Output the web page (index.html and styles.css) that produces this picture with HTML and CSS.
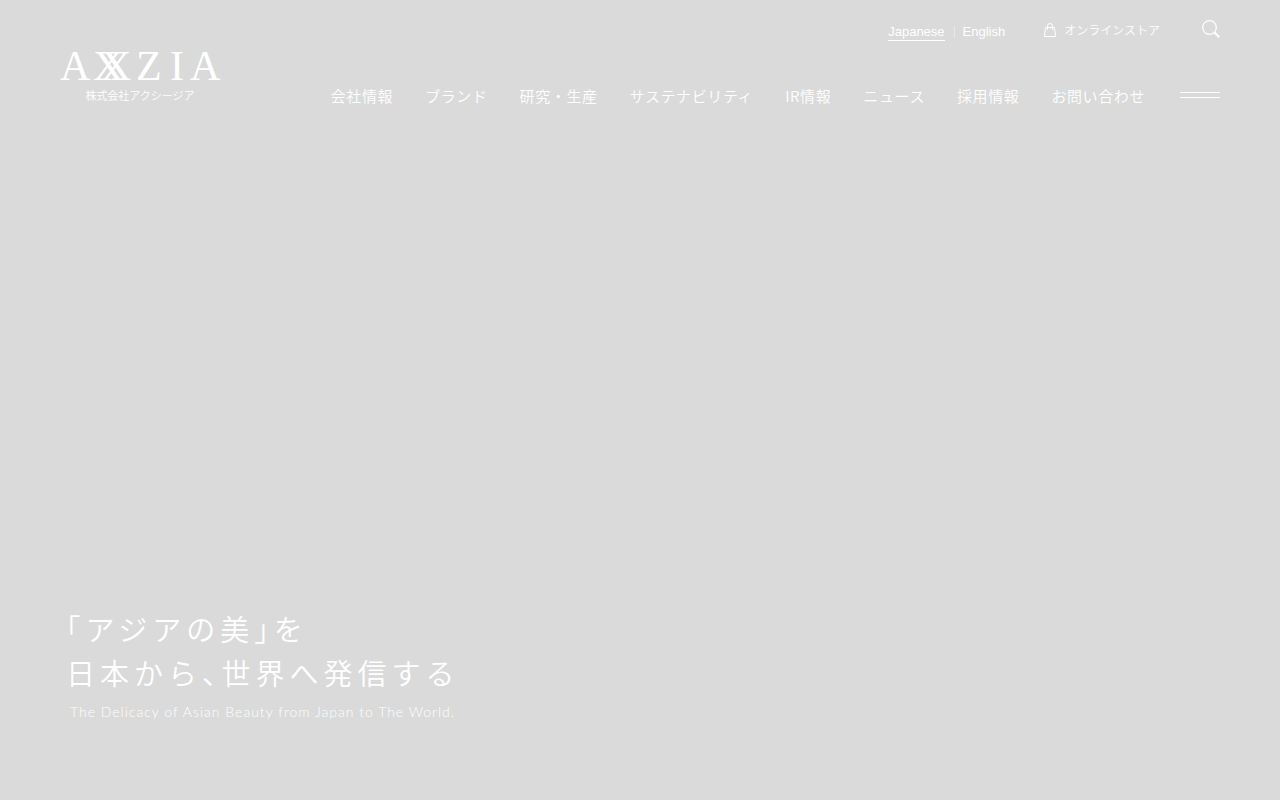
FILE: index.html
```html
<!DOCTYPE html>
<html lang="ja">
<head>
  <meta charset="UTF-8">
  <meta name="viewport" content="width=device-width, initial-scale=1.0">
  <title>株式会社アクシージア</title>
  <link rel="stylesheet" href="styles.css">
</head>
<body>
  <div class="page">
    <header class="header">
      <a class="logo" href="#">
        <svg class="logo-mark" viewBox="0 0 160 40" width="160" height="40" role="img" aria-label="AXXZIA">
          <text x="0" y="34">A</text>
          <text x="33" y="34">X</text>
          <text x="41" y="34">X</text>
          <text x="76" y="34">Z</text>
          <text x="110" y="34">I</text>
          <text x="130" y="34">A</text>
        </svg>
        <span class="logo-name">株式会社アクシージア</span>
      </a>

      <div class="header-right">
        <div class="tools">
          <div class="lang">
            <a class="current" href="#">Japanese</a>
            <a href="#">English</a>
          </div>
          <a class="store" href="#">
            <svg viewBox="0 0 12 15" width="12" height="15" fill="none" stroke="currentColor" aria-hidden="true">
              <path d="M1.5 4.5h9l1 9H.5z"/>
              <path d="M3.5 7V3a2.5 2.5 0 0 1 5 0v4"/>
            </svg>
            オンラインストア
          </a>
          <button class="search" type="button" aria-label="検索">
            <svg viewBox="0 0 18 20" width="18" height="20" fill="none" stroke="currentColor" aria-hidden="true">
              <circle cx="7.5" cy="7.5" r="6.8" stroke-width="1.2"/>
              <path d="M12.5 12.5l4.7 4.7" stroke-width="2.2"/>
            </svg>
          </button>
        </div>

        <div class="nav-row">
          <nav class="nav">
            <a href="#">会社情報</a>
            <a href="#">ブランド</a>
            <a href="#">研究・生産</a>
            <a href="#">サステナビリティ</a>
            <a href="#">IR情報</a>
            <a href="#">ニュース</a>
            <a href="#">採用情報</a>
            <a href="#">お問い合わせ</a>
          </nav>
          <button class="menu-btn" type="button" aria-label="メニュー"></button>
        </div>
      </div>
    </header>

    <main class="hero">
      <h1>「アジアの美」を<br>日本から、世界へ発信する</h1>
      <p>The Delicacy of Asian Beauty from Japan to The World.</p>
    </main>
  </div>
</body>
</html>
```
FILE: styles.css
```css
* {
    box-sizing: border-box;
}

body {
    margin: 0;
    background-color: #dadada;
    color: #ffffff;
    font-family: "Noto Sans CJK JP", sans-serif;
}

a {
    color: inherit;
    text-decoration: none;
}

button {
    padding: 0;
    border: none;
    background: none;
    color: inherit;
    cursor: pointer;
}

svg {
    display: block;
}

.page {
    display: flex;
    flex-direction: column;
    justify-content: space-between;
    min-height: 100vh;
}

.header {
    display: flex;
    align-items: flex-start;
    justify-content: space-between;
    padding: 17px 60px 0;
}

.logo {
    display: flex;
    flex-direction: column;
    align-items: center;
    padding-top: 29px;
}

.logo-mark {
    overflow: visible;
}

.logo-mark text {
    fill: currentColor;
    font-family: "Liberation Serif", serif;
    font-size: 42px;
}

.logo-name {
    font-size: 11px;
    font-weight: 350;
    line-height: 18px;
}

.header-right {
    display: flex;
    flex-direction: column;
    align-items: flex-end;
    gap: 43px;
}

.tools {
    display: flex;
    align-items: center;
}

.lang {
    display: flex;
    margin-right: 39px;
    padding-top: 4px;
    font-family: "Liberation Sans", sans-serif;
    font-size: 13px;
    line-height: 16px;
}

.lang a + a {
    margin-left: 9px;
    padding-left: 9px;
    background: linear-gradient(#e8e8e8, #e8e8e8) left center / 1px 12px no-repeat;
}

.lang .current {
    box-shadow: 0 1px 0 #ffffff;
}

.store {
    display: flex;
    align-items: center;
    gap: 8px;
    margin-right: 42px;
    font-size: 12px;
    font-weight: 350;
    line-height: 26px;
}

.nav-row {
    display: flex;
    align-items: center;
    gap: 35px;
}

.nav {
    display: flex;
    gap: 32px;
    font-size: 15px;
    font-weight: 350;
    line-height: 20px;
    letter-spacing: 0.04em;
}

.menu-btn {
    width: 40px;
    height: 6px;
    margin-bottom: 2px;
    border-top: 1px solid #ffffff;
    border-bottom: 1px solid #ffffff;
}

.hero {
    padding: 0 66px 79px;
}

.hero h1 {
    margin: 0;
    font-size: 29px;
    font-weight: 350;
    line-height: 44px;
    letter-spacing: 5px;
    font-feature-settings: "halt";
}

.hero p {
    margin: 9px 4px 0;
    font-family: Lato, sans-serif;
    font-size: 14px;
    font-weight: 300;
    line-height: 18px;
    letter-spacing: 1px;
}
```
